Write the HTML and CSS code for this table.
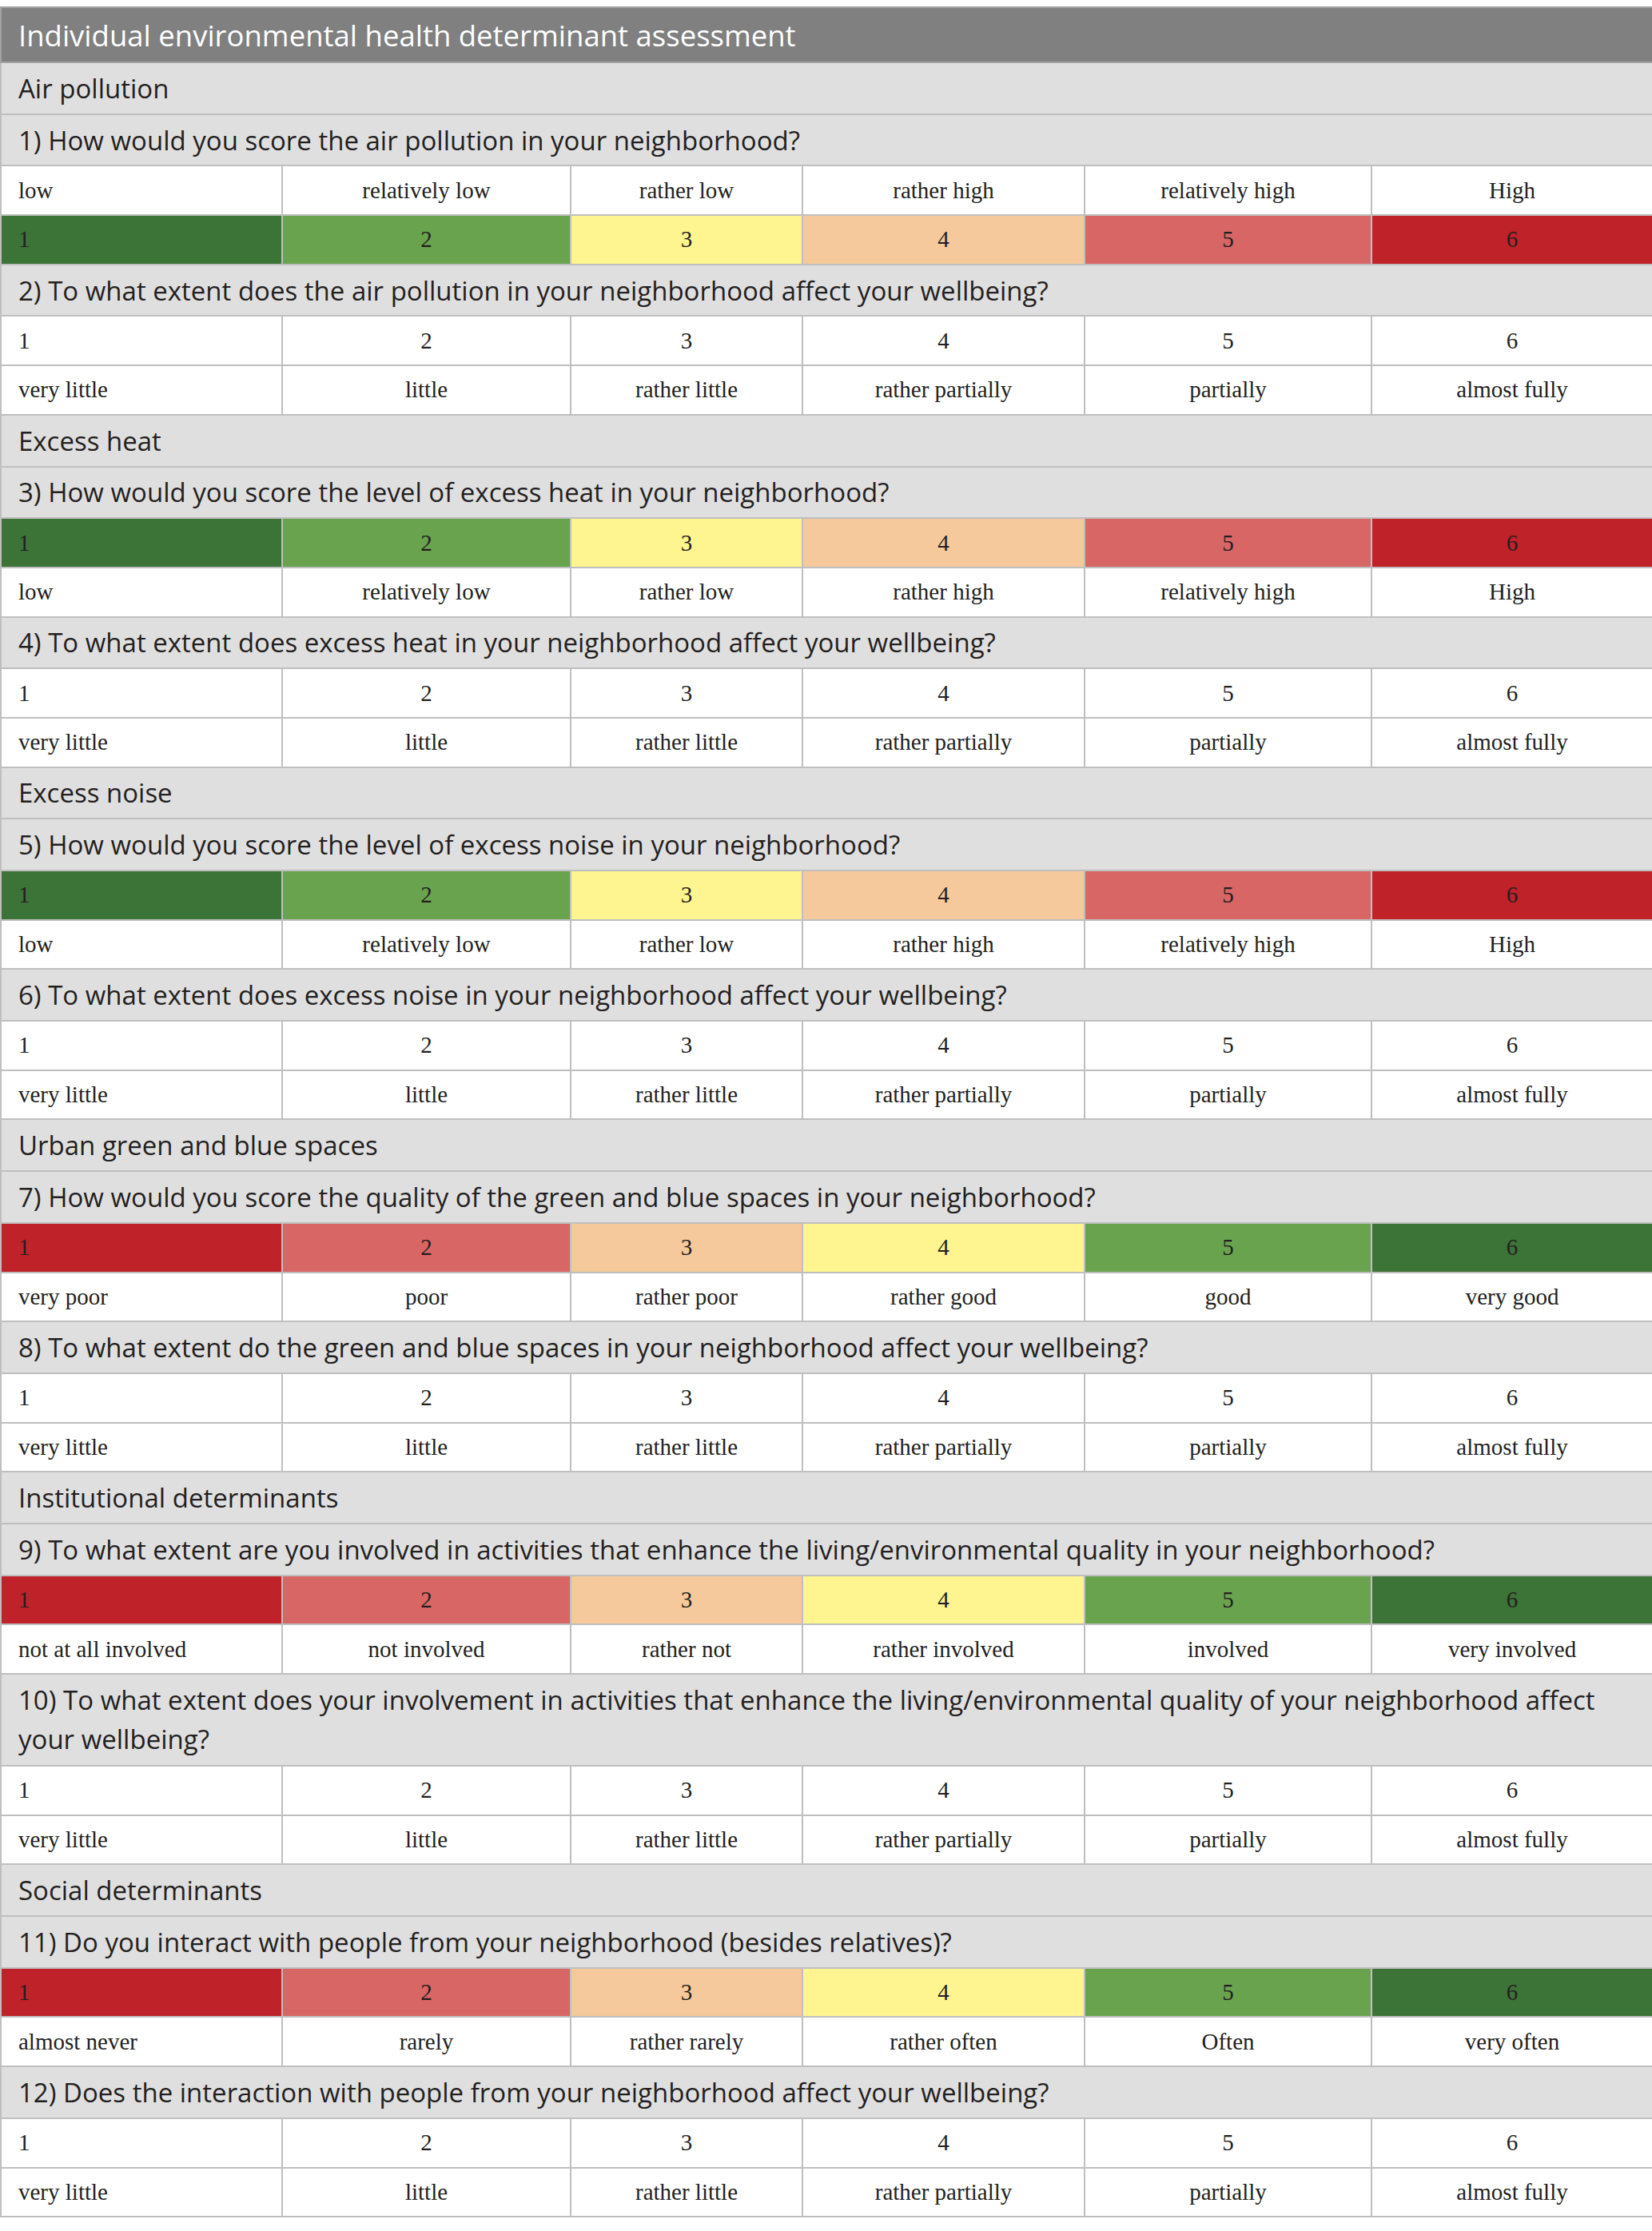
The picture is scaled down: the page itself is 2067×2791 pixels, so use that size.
FILE: index.html
```html
<!DOCTYPE html>
<html lang="en">
<head>
    <meta charset="UTF-8">
    <title>Individual environmental health determinant assessment</title>
    <link rel="stylesheet" href="styles.css">
</head>
<body>

<table class="survey">
    <colgroup>
        <col class="c-a"><col class="c-b"><col class="c-c"><col class="c-d"><col class="c-e"><col class="c-f">
    </colgroup>
    <tr class="head"><td colspan="6">Individual environmental health determinant assessment</td></tr>

    <tr class="grey"><td colspan="6">Air pollution</td></tr>
    <tr class="grey"><td colspan="6">1) How would you score the air pollution in your neighborhood?</td></tr>
    <tr class="cell"><td>low</td><td>relatively low</td><td>rather low</td><td>rather high</td><td>relatively high</td><td>High</td></tr>
    <tr class="cell"><td class="s1">1</td><td class="s2">2</td><td class="s3">3</td><td class="s4">4</td><td class="s5">5</td><td class="s6">6</td></tr>
    <tr class="grey"><td colspan="6">2) To what extent does the air pollution in your neighborhood affect your wellbeing?</td></tr>
    <tr class="cell"><td>1</td><td>2</td><td>3</td><td>4</td><td>5</td><td>6</td></tr>
    <tr class="cell"><td>very little</td><td>little</td><td>rather little</td><td>rather partially</td><td>partially</td><td>almost fully</td></tr>

    <tr class="grey"><td colspan="6">Excess heat</td></tr>
    <tr class="grey"><td colspan="6">3) How would you score the level of excess heat in your neighborhood?</td></tr>
    <tr class="cell"><td class="s1">1</td><td class="s2">2</td><td class="s3">3</td><td class="s4">4</td><td class="s5">5</td><td class="s6">6</td></tr>
    <tr class="cell"><td>low</td><td>relatively low</td><td>rather low</td><td>rather high</td><td>relatively high</td><td>High</td></tr>
    <tr class="grey"><td colspan="6">4) To what extent does excess heat in your neighborhood affect your wellbeing?</td></tr>
    <tr class="cell"><td>1</td><td>2</td><td>3</td><td>4</td><td>5</td><td>6</td></tr>
    <tr class="cell"><td>very little</td><td>little</td><td>rather little</td><td>rather partially</td><td>partially</td><td>almost fully</td></tr>

    <tr class="grey"><td colspan="6">Excess noise</td></tr>
    <tr class="grey"><td colspan="6">5) How would you score the level of excess noise in your neighborhood?</td></tr>
    <tr class="cell"><td class="s1">1</td><td class="s2">2</td><td class="s3">3</td><td class="s4">4</td><td class="s5">5</td><td class="s6">6</td></tr>
    <tr class="cell"><td>low</td><td>relatively low</td><td>rather low</td><td>rather high</td><td>relatively high</td><td>High</td></tr>
    <tr class="grey"><td colspan="6">6) To what extent does excess noise in your neighborhood affect your wellbeing?</td></tr>
    <tr class="cell"><td>1</td><td>2</td><td>3</td><td>4</td><td>5</td><td>6</td></tr>
    <tr class="cell"><td>very little</td><td>little</td><td>rather little</td><td>rather partially</td><td>partially</td><td>almost fully</td></tr>

    <tr class="grey"><td colspan="6">Urban green and blue spaces</td></tr>
    <tr class="grey"><td colspan="6">7) How would you score the quality of the green and blue spaces in your neighborhood?</td></tr>
    <tr class="cell"><td class="s6">1</td><td class="s5">2</td><td class="s4">3</td><td class="s3">4</td><td class="s2">5</td><td class="s1">6</td></tr>
    <tr class="cell"><td>very poor</td><td>poor</td><td>rather poor</td><td>rather good</td><td>good</td><td>very good</td></tr>
    <tr class="grey"><td colspan="6">8) To what extent do the green and blue spaces in your neighborhood affect your wellbeing?</td></tr>
    <tr class="cell"><td>1</td><td>2</td><td>3</td><td>4</td><td>5</td><td>6</td></tr>
    <tr class="cell"><td>very little</td><td>little</td><td>rather little</td><td>rather partially</td><td>partially</td><td>almost fully</td></tr>

    <tr class="grey"><td colspan="6">Institutional determinants</td></tr>
    <tr class="grey"><td colspan="6">9) To what extent are you involved in activities that enhance the living/environmental quality in your neighborhood?</td></tr>
    <tr class="cell"><td class="s6">1</td><td class="s5">2</td><td class="s4">3</td><td class="s3">4</td><td class="s2">5</td><td class="s1">6</td></tr>
    <tr class="cell"><td>not at all involved</td><td>not involved</td><td>rather not</td><td>rather involved</td><td>involved</td><td>very involved</td></tr>
    <tr class="grey two"><td colspan="6">10) To what extent does your involvement in activities that enhance the living/environmental quality of your neighborhood affect your wellbeing?</td></tr>
    <tr class="cell"><td>1</td><td>2</td><td>3</td><td>4</td><td>5</td><td>6</td></tr>
    <tr class="cell"><td>very little</td><td>little</td><td>rather little</td><td>rather partially</td><td>partially</td><td>almost fully</td></tr>

    <tr class="grey"><td colspan="6">Social determinants</td></tr>
    <tr class="grey"><td colspan="6">11) Do you interact with people from your neighborhood (besides relatives)?</td></tr>
    <tr class="cell"><td class="s6">1</td><td class="s5">2</td><td class="s4">3</td><td class="s3">4</td><td class="s2">5</td><td class="s1">6</td></tr>
    <tr class="cell"><td>almost never</td><td>rarely</td><td>rather rarely</td><td>rather often</td><td>Often</td><td>very often</td></tr>
    <tr class="grey"><td colspan="6">12) Does the interaction with people from your neighborhood affect your wellbeing?</td></tr>
    <tr class="cell"><td>1</td><td>2</td><td>3</td><td>4</td><td>5</td><td>6</td></tr>
    <tr class="cell"><td>very little</td><td>little</td><td>rather little</td><td>rather partially</td><td>partially</td><td>almost fully</td></tr>
</table>

</body>
</html>
```

FILE: styles.css
```css
html, body {
    margin: 0;
    padding: 0;
    background-color: #fff;
}
body {
    padding-top: 8px;
}
.survey {
    width: 2067px;
    border-collapse: collapse;
    table-layout: fixed;
    color: #231f20;
}
.c-a { width: 352px; }
.c-b { width: 361px; }
.c-c { width: 290px; }
.c-d { width: 353px; }
.c-e { width: 359px; }
.c-f { width: 352px; }
.survey td {
    border: 2px solid #bfbfbf;
    padding: 0 21px;
}
.head {
    height: 69px;
}
.head td {
    background-color: #7f807f;
    border-color: #a3a3a3;
    color: #fff;
    font-family: "Open Sans", "Noto Sans", sans-serif;
    font-size: 36.5px;
}
.grey {
    height: 64.7px;
}
.grey td {
    background-color: #e0dfe0;
    font-family: "Open Sans", "Noto Sans", sans-serif;
    font-size: 33px;
}
.grey.two td {
    line-height: 49px;
    padding-top: 7px;
    padding-bottom: 8px;
}
.cell {
    height: 61.7px;
}
.cell td {
    font-family: "Liberation Serif", "Times New Roman", serif;
    font-size: 29px;
    text-align: center;
}
.cell td:first-child {
    text-align: left;
}
.s1 { background-color: #3c7336; }
.s2 { background-color: #6aa34e; }
.s3 { background-color: #fff590; }
.s4 { background-color: #f5c99b; }
.s5 { background-color: #d76665; }
.s6 { background-color: #bf2228; }
```
